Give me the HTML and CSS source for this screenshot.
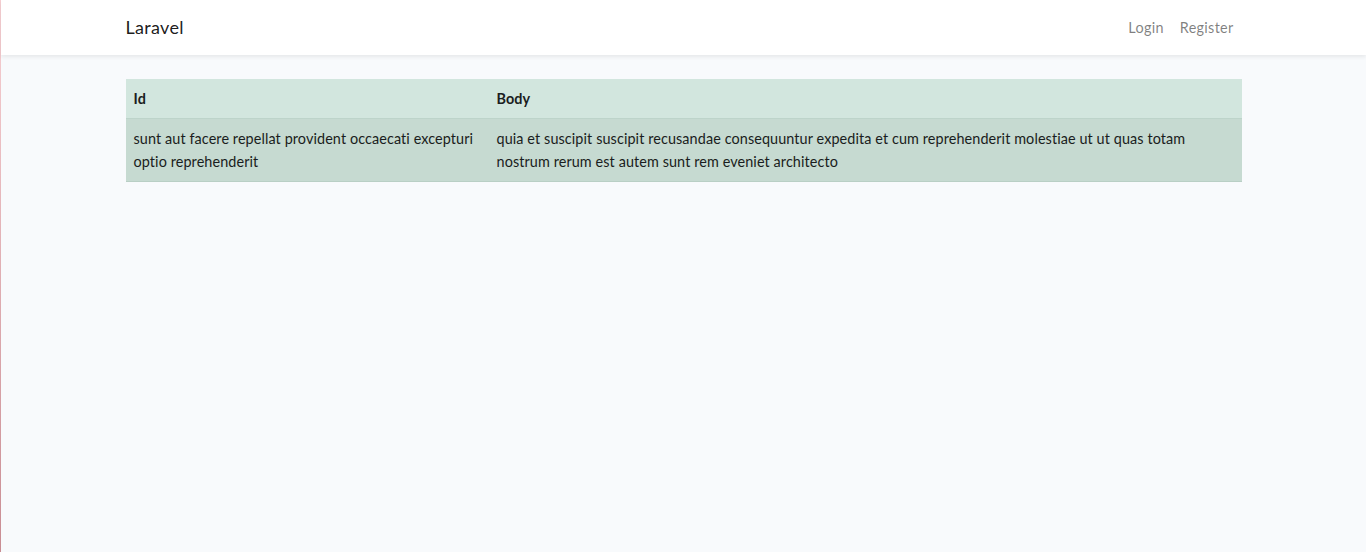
FILE: index.html
```html
<!DOCTYPE html>
<html lang="en">
<head>
<meta charset="utf-8">
<title>Laravel</title>
<link rel="stylesheet" href="styles.css">
</head>
<body>
<div class="app">
  <nav class="navbar">
    <div class="container nav-inner">
      <a class="brand" href="#">Laravel</a>
      <ul class="nav-links">
        <li><a href="#">Login</a></li>
        <li><a href="#">Register</a></li>
      </ul>
    </div>
  </nav>
  <main class="main">
    <div class="container">
      <table class="table">
        <thead>
          <tr><th class="col-id">Id</th><th>Body</th></tr>
        </thead>
        <tbody>
          <tr>
            <td>sunt aut facere repellat provident occaecati excepturi optio reprehenderit</td>
            <td>quia et suscipit suscipit recusandae consequuntur expedita et cum reprehenderit molestiae ut ut quas totam nostrum rerum est autem sunt rem eveniet architecto</td>
          </tr>
        </tbody>
      </table>
    </div>
  </main>
</div>
</body>
</html>
```
FILE: styles.css
```css
* { box-sizing: border-box; }
html, body { height: 100%; }
body {
  margin: 0;
  background: #f8fafc;
  font-family: "Lato", "Open Sans", sans-serif;
  font-size: 14.4px;
  line-height: 1.6;
  color: #1a1d20;
}
.app {
  min-height: 100%;
  border-left: 1px solid #e8b4b8;
  border-image: linear-gradient(#f7d0d3, #c98d93) 1;
}
.container {
  width: 1146px;
  margin: 0 auto;
  padding: 0 15px;
}
.navbar {
  background: #fff;
  box-shadow: 0 2px 4px rgba(0,0,0,.075);
  height: 55px;
  position: relative;
}
.nav-inner {
  height: 55px;
  display: flex;
  align-items: center;
  justify-content: space-between;
}
.brand {
  font-size: 18px;
  letter-spacing: 0.3px;
  color: rgba(0,0,0,.9);
  text-decoration: none;
}
.nav-links {
  list-style: none;
  margin: 0;
  padding: 0;
  display: flex;
}
.nav-links a {
  display: block;
  padding: 8px;
  letter-spacing: 0.3px;
  color: rgba(0,0,0,.5);
  text-decoration: none;
}
.main {
  padding-top: 24px;
}
.table {
  width: 100%;
  border-collapse: collapse;
  letter-spacing: 0.1px;
}
.table th, .table td {
  text-align: left;
  vertical-align: top;
  padding: 8px;
}
.table th {
  font-weight: 700;
  background: #d2e6de;
  border-bottom: 1px solid #bdd4ca;
}
.table td {
  background: #c6dad1;
  border-bottom: 1px solid #b9cfc5;
}
.col-id { width: 363px; }
```
